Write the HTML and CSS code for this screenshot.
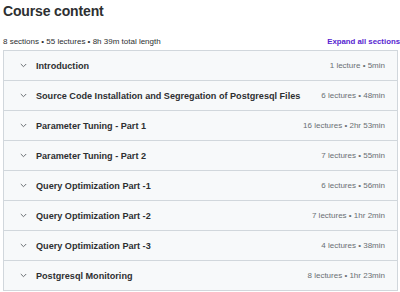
FILE: index.html
```html
<!DOCTYPE html>
<html>
<head>
<meta charset="utf-8">
<link rel="stylesheet" href="styles.css">
</head>
<body>
<div class="page">
  <h2 class="title">Course content</h2>
  <div class="meta">
    <span class="stats">8 sections • 55 lectures • 8h 39m total length</span>
    <span class="expand">Expand all sections</span>
  </div>
  <div class="list">
    <div class="row"><span class="chev"><svg width="7" height="5" viewBox="0 0 7 5"><path d="M0.8 1 L3.5 3.7 L6.2 1" fill="none" stroke="#6a6f73" stroke-width="1"/></svg></span><span class="name">Introduction</span><span class="info">1 lecture • 5min</span></div>
    <div class="row"><span class="chev"><svg width="7" height="5" viewBox="0 0 7 5"><path d="M0.8 1 L3.5 3.7 L6.2 1" fill="none" stroke="#6a6f73" stroke-width="1"/></svg></span><span class="name">Source Code Installation and Segregation of Postgresql Files</span><span class="info">6 lectures • 48min</span></div>
    <div class="row"><span class="chev"><svg width="7" height="5" viewBox="0 0 7 5"><path d="M0.8 1 L3.5 3.7 L6.2 1" fill="none" stroke="#6a6f73" stroke-width="1"/></svg></span><span class="name">Parameter Tuning - Part 1</span><span class="info">16 lectures • 2hr 53min</span></div>
    <div class="row"><span class="chev"><svg width="7" height="5" viewBox="0 0 7 5"><path d="M0.8 1 L3.5 3.7 L6.2 1" fill="none" stroke="#6a6f73" stroke-width="1"/></svg></span><span class="name">Parameter Tuning - Part 2</span><span class="info">7 lectures • 55min</span></div>
    <div class="row"><span class="chev"><svg width="7" height="5" viewBox="0 0 7 5"><path d="M0.8 1 L3.5 3.7 L6.2 1" fill="none" stroke="#6a6f73" stroke-width="1"/></svg></span><span class="name">Query Optimization Part -1</span><span class="info">6 lectures • 56min</span></div>
    <div class="row"><span class="chev"><svg width="7" height="5" viewBox="0 0 7 5"><path d="M0.8 1 L3.5 3.7 L6.2 1" fill="none" stroke="#6a6f73" stroke-width="1"/></svg></span><span class="name">Query Optimization Part -2</span><span class="info">7 lectures • 1hr 2min</span></div>
    <div class="row"><span class="chev"><svg width="7" height="5" viewBox="0 0 7 5"><path d="M0.8 1 L3.5 3.7 L6.2 1" fill="none" stroke="#6a6f73" stroke-width="1"/></svg></span><span class="name">Query Optimization Part -3</span><span class="info">4 lectures • 38min</span></div>
    <div class="row"><span class="chev"><svg width="7" height="5" viewBox="0 0 7 5"><path d="M0.8 1 L3.5 3.7 L6.2 1" fill="none" stroke="#6a6f73" stroke-width="1"/></svg></span><span class="name">Postgresql Monitoring</span><span class="info">8 lectures • 1hr 23min</span></div>
  </div>
</div>
</body>
</html>
```
FILE: styles.css
```css
* { box-sizing: border-box; }
html, body { margin: 0; padding: 0; background: #fff; }
body { font-family: "Liberation Sans", Arial, sans-serif; color: #2d2f31; }
.page { padding: 0 0 0 3px; width: 400px; }
.title { margin: 0; padding-top: 2px; font-size: 14px; line-height: 18px; font-weight: 700; letter-spacing: -0.15px; }
.meta { display: flex; justify-content: space-between; align-items: center; margin-top: 14px; height: 14px; font-size: 8px; }
.stats { color: #2d2f31; }
.expand { color: #5624d0; font-weight: 700; font-size: 7.8px; }
.list { margin-top: 2px; width: 395px; border: 1px solid #d1d7dc; }
.row { display: flex; align-items: center; height: 30px; background: #f7f9fa; border-top: 1px solid #d1d7dc; padding: 0 12px 0 16px; }
.row:first-child { border-top: none; height: 29px; }
.chev { display: flex; width: 16px; }
.name { flex: 1; font-weight: 700; font-size: 9.1px; color: #2d2f31; }
.info { font-size: 8px; color: #6a6f73; }
```
